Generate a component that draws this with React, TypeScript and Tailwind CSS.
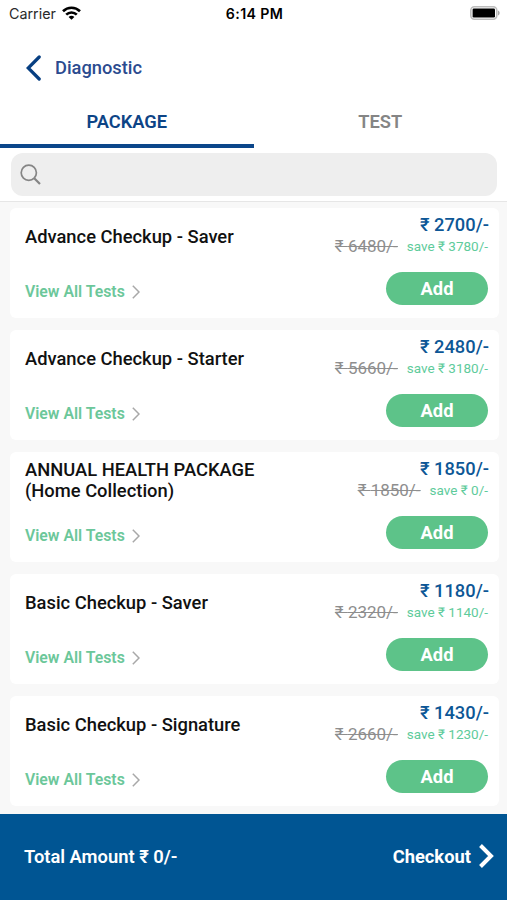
interface HealthPackage {
  name: string;
  price: number;
  mrp: number;
}

const PACKAGES: HealthPackage[] = [
  { name: "Advance Checkup - Saver", price: 2700, mrp: 6480 },
  { name: "Advance Checkup - Starter", price: 2480, mrp: 5660 },
  { name: "ANNUAL HEALTH PACKAGE (Home Collection)", price: 1850, mrp: 1850 },
  { name: "Basic Checkup - Saver", price: 1180, mrp: 2320 },
  { name: "Basic Checkup - Signature", price: 1430, mrp: 2660 },
];

// ─── Status bar ─────────────────────────────────────────────────────────────
function StatusBar() {
  return (
    <div className="grid h-7 grid-cols-3 items-center pr-[7px] pl-[9px] font-['Inter',sans-serif] text-black">
      <div className="flex items-center gap-1.5">
        <span className="text-[14.3px] text-[#2a2a2a]">Carrier</span>
        <svg className="mb-0.5 h-[14px] w-[19px]" viewBox="0 0 19 14" fill="none" stroke="#000" strokeWidth="2.6" aria-hidden>
          <path d="M1 5.2C5.7.6 13.3.6 18 5.2" />
          <path d="M4.2 8.7c3-3 7.6-3 10.6 0" />
          <path d="M9.5 13.8 6.6 10.9c1.7-1.5 4.1-1.5 5.8 0z" fill="#000" stroke="none" />
        </svg>
      </div>
      <span className="text-center text-[14.2px] font-semibold tracking-[0.35px] whitespace-nowrap">6:14 PM</span>
      <svg className="mb-0.5 h-[14px] w-[30px] justify-self-end" viewBox="0 0 30 14" aria-hidden>
        <rect x="0.8" y="0.8" width="26" height="12.4" rx="3.6" fill="#fff" stroke="#bdbdbd" strokeWidth="1.6" />
        <rect x="2.6" y="2.6" width="22.4" height="8.8" rx="1.2" fill="#000" />
        <path d="M28 4.6c2.2.8 2.2 4 0 4.8z" fill="#aaa" />
      </svg>
    </div>
  );
}

// ─── Package card ───────────────────────────────────────────────────────────
function PackageCard({ item }: { item: HealthPackage }) {
  return (
    <li className="flex h-[110px] justify-between rounded-md bg-white pr-[11px] pl-[15px]">
      <div className="flex w-[250px] flex-col">
        <div className="flex h-14 items-center">
          <h2 className="text-[18.35px] leading-[21px] font-medium text-[#111]">{item.name}</h2>
        </div>
        <button className="mt-[17px] flex items-center gap-[7px] text-left text-[15.8px] leading-[22px] font-semibold text-[#6cc79a]">
          View All Tests
          <svg className="h-[14px] w-2" viewBox="0 0 8 14" fill="none" stroke="#a8a8a8" strokeWidth="1.5" aria-hidden>
            <path d="M.8.8 7 7 .8 13.2" />
          </svg>
        </button>
      </div>

      <div className="flex flex-col items-end">
        <span className="-mr-px mt-[6px] text-[18.3px] leading-[22px] font-medium text-[#0d5796]">₹ {item.price}/-</span>
        <div className="flex h-5 items-center gap-[9px] leading-5">
          <s className="text-[17px] text-[#8e8e8e]">₹ {item.mrp}/-</s>
          <span className="text-[13.5px] text-[#5ecb9b]">save ₹ {item.mrp - item.price}/-</span>
        </div>
        <button className="mt-4 h-[33px] w-[102px] rounded-full bg-[#5dc389] text-[18.3px] font-bold text-white">
          Add
        </button>
      </div>
    </li>
  );
}

export default function App() {
  return (
    <div className="flex h-[900px] w-[507px] flex-col overflow-hidden bg-white font-['Roboto',sans-serif]">
      <StatusBar />

      {/* Screen title */}
      <header className="flex h-[72px] items-center gap-[14px] pt-2 pl-[26px]">
        <svg className="h-[26px] w-[15px]" viewBox="0 0 15 26" fill="none" stroke="#073f82" strokeWidth="3.2" strokeLinecap="round" aria-hidden>
          <path d="M13.2 2 2.2 13 13.2 24" />
        </svg>
        <h1 className="text-[18.3px] font-medium text-[#2b4b8f]">Diagnostic</h1>
      </header>

      {/* Tabs */}
      <nav className="grid h-12 grid-cols-2 text-[18.3px] font-semibold">
        <button className="border-b-4 border-[#0b468a] pb-px text-[#0d4486]">PACKAGE</button>
        <button className="border-b-4 border-transparent pb-px text-[#858585]">TEST</button>
      </nav>

      {/* Search */}
      <div className="flex h-[54px] border-b border-[#e6e6e6] pt-[5px] pr-2.5 pb-[5px] pl-[11px]">
        <label className="flex h-[43px] flex-1 items-center rounded-xl bg-[#eeeeee] pl-[9px]">
          <svg className="h-[21px] w-[21px]" viewBox="0 0 21 21" fill="none" stroke="#858585" aria-hidden>
            <circle cx="8.8" cy="8.8" r="7.6" strokeWidth="1.7" />
            <path d="m14 14 6 6" strokeWidth="2.2" />
          </svg>
          <input className="flex-1 bg-transparent outline-none" aria-label="Search" />
        </label>
      </div>

      <ul className="flex min-h-0 flex-1 flex-col gap-3 overflow-hidden bg-[#f8f8f8] pt-1.5 pr-2 pl-2.5">
        {PACKAGES.map((item) => (
          <PackageCard key={item.name} item={item} />
        ))}
      </ul>

      {/* Cart total */}
      <footer className="flex h-[86px] items-center justify-between bg-[#005593] pr-[13px] pb-px pl-[24px] text-[18.35px] text-white">
        <span className="font-semibold">Total Amount ₹ 0/-</span>
        <button className="flex items-center gap-2 font-bold">
          Checkout
          <svg className="h-6 w-[15px]" viewBox="0 0 15 24" fill="none" stroke="#fff" strokeWidth="4" aria-hidden>
            <path d="M1.5 1.5 12 12 1.5 22.5" />
          </svg>
        </button>
      </footer>
    </div>
  );
}
